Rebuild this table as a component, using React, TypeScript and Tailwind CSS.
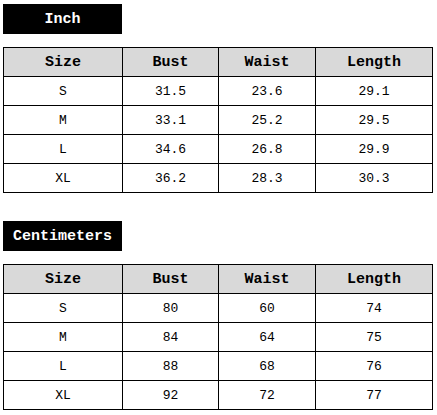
const inch = [
  ["S", "31.5", "23.6", "29.1"],
  ["M", "33.1", "25.2", "29.5"],
  ["L", "34.6", "26.8", "29.9"],
  ["XL", "36.2", "28.3", "30.3"],
];

const cm = [
  ["S", "80", "60", "74"],
  ["M", "84", "64", "75"],
  ["L", "88", "68", "76"],
  ["XL", "92", "72", "77"],
];

const cols = ["w-[119px]", "w-[96px]", "w-[97px]", "w-[117px]"];

function SizeTable({ rows }: { rows: string[][] }) {
  return (
    <table className="border-collapse table-fixed w-[430px] text-black">
      <thead>
        <tr className="bg-[#d9d9d9]">
          {["Size", "Bust", "Waist", "Length"].map((h, i) => (
            <th key={h} className={`${cols[i]} h-[29px] border border-black p-0 pt-[2px] text-center text-[15px] font-bold`}>
              {h}
            </th>
          ))}
        </tr>
      </thead>
      <tbody>
        {rows.map((r) => (
          <tr key={r[0]}>
            {r.map((c, i) => (
              <td key={i} className="h-[29px] border border-black p-0 pt-[1px] text-center text-[13px]">
                {c}
              </td>
            ))}
          </tr>
        ))}
      </tbody>
    </table>
  );
}

function Label({ text }: { text: string }) {
  return (
    <div className="w-[119px] h-[30px] pt-[3px] bg-black text-white font-bold text-[15px] flex items-center justify-center">
      {text}
    </div>
  );
}

export default function App() {
  return (
    <div className="w-[437px] h-[415px] bg-white pt-[4px] pl-[3px] font-['Liberation_Mono',monospace]">
      <Label text="Inch" />
      <div className="mt-[13px]">
        <SizeTable rows={inch} />
      </div>
      <div className="mt-[28px]">
        <Label text="Centimeters" />
      </div>
      <div className="mt-[13px]">
        <SizeTable rows={cm} />
      </div>
    </div>
  );
}
